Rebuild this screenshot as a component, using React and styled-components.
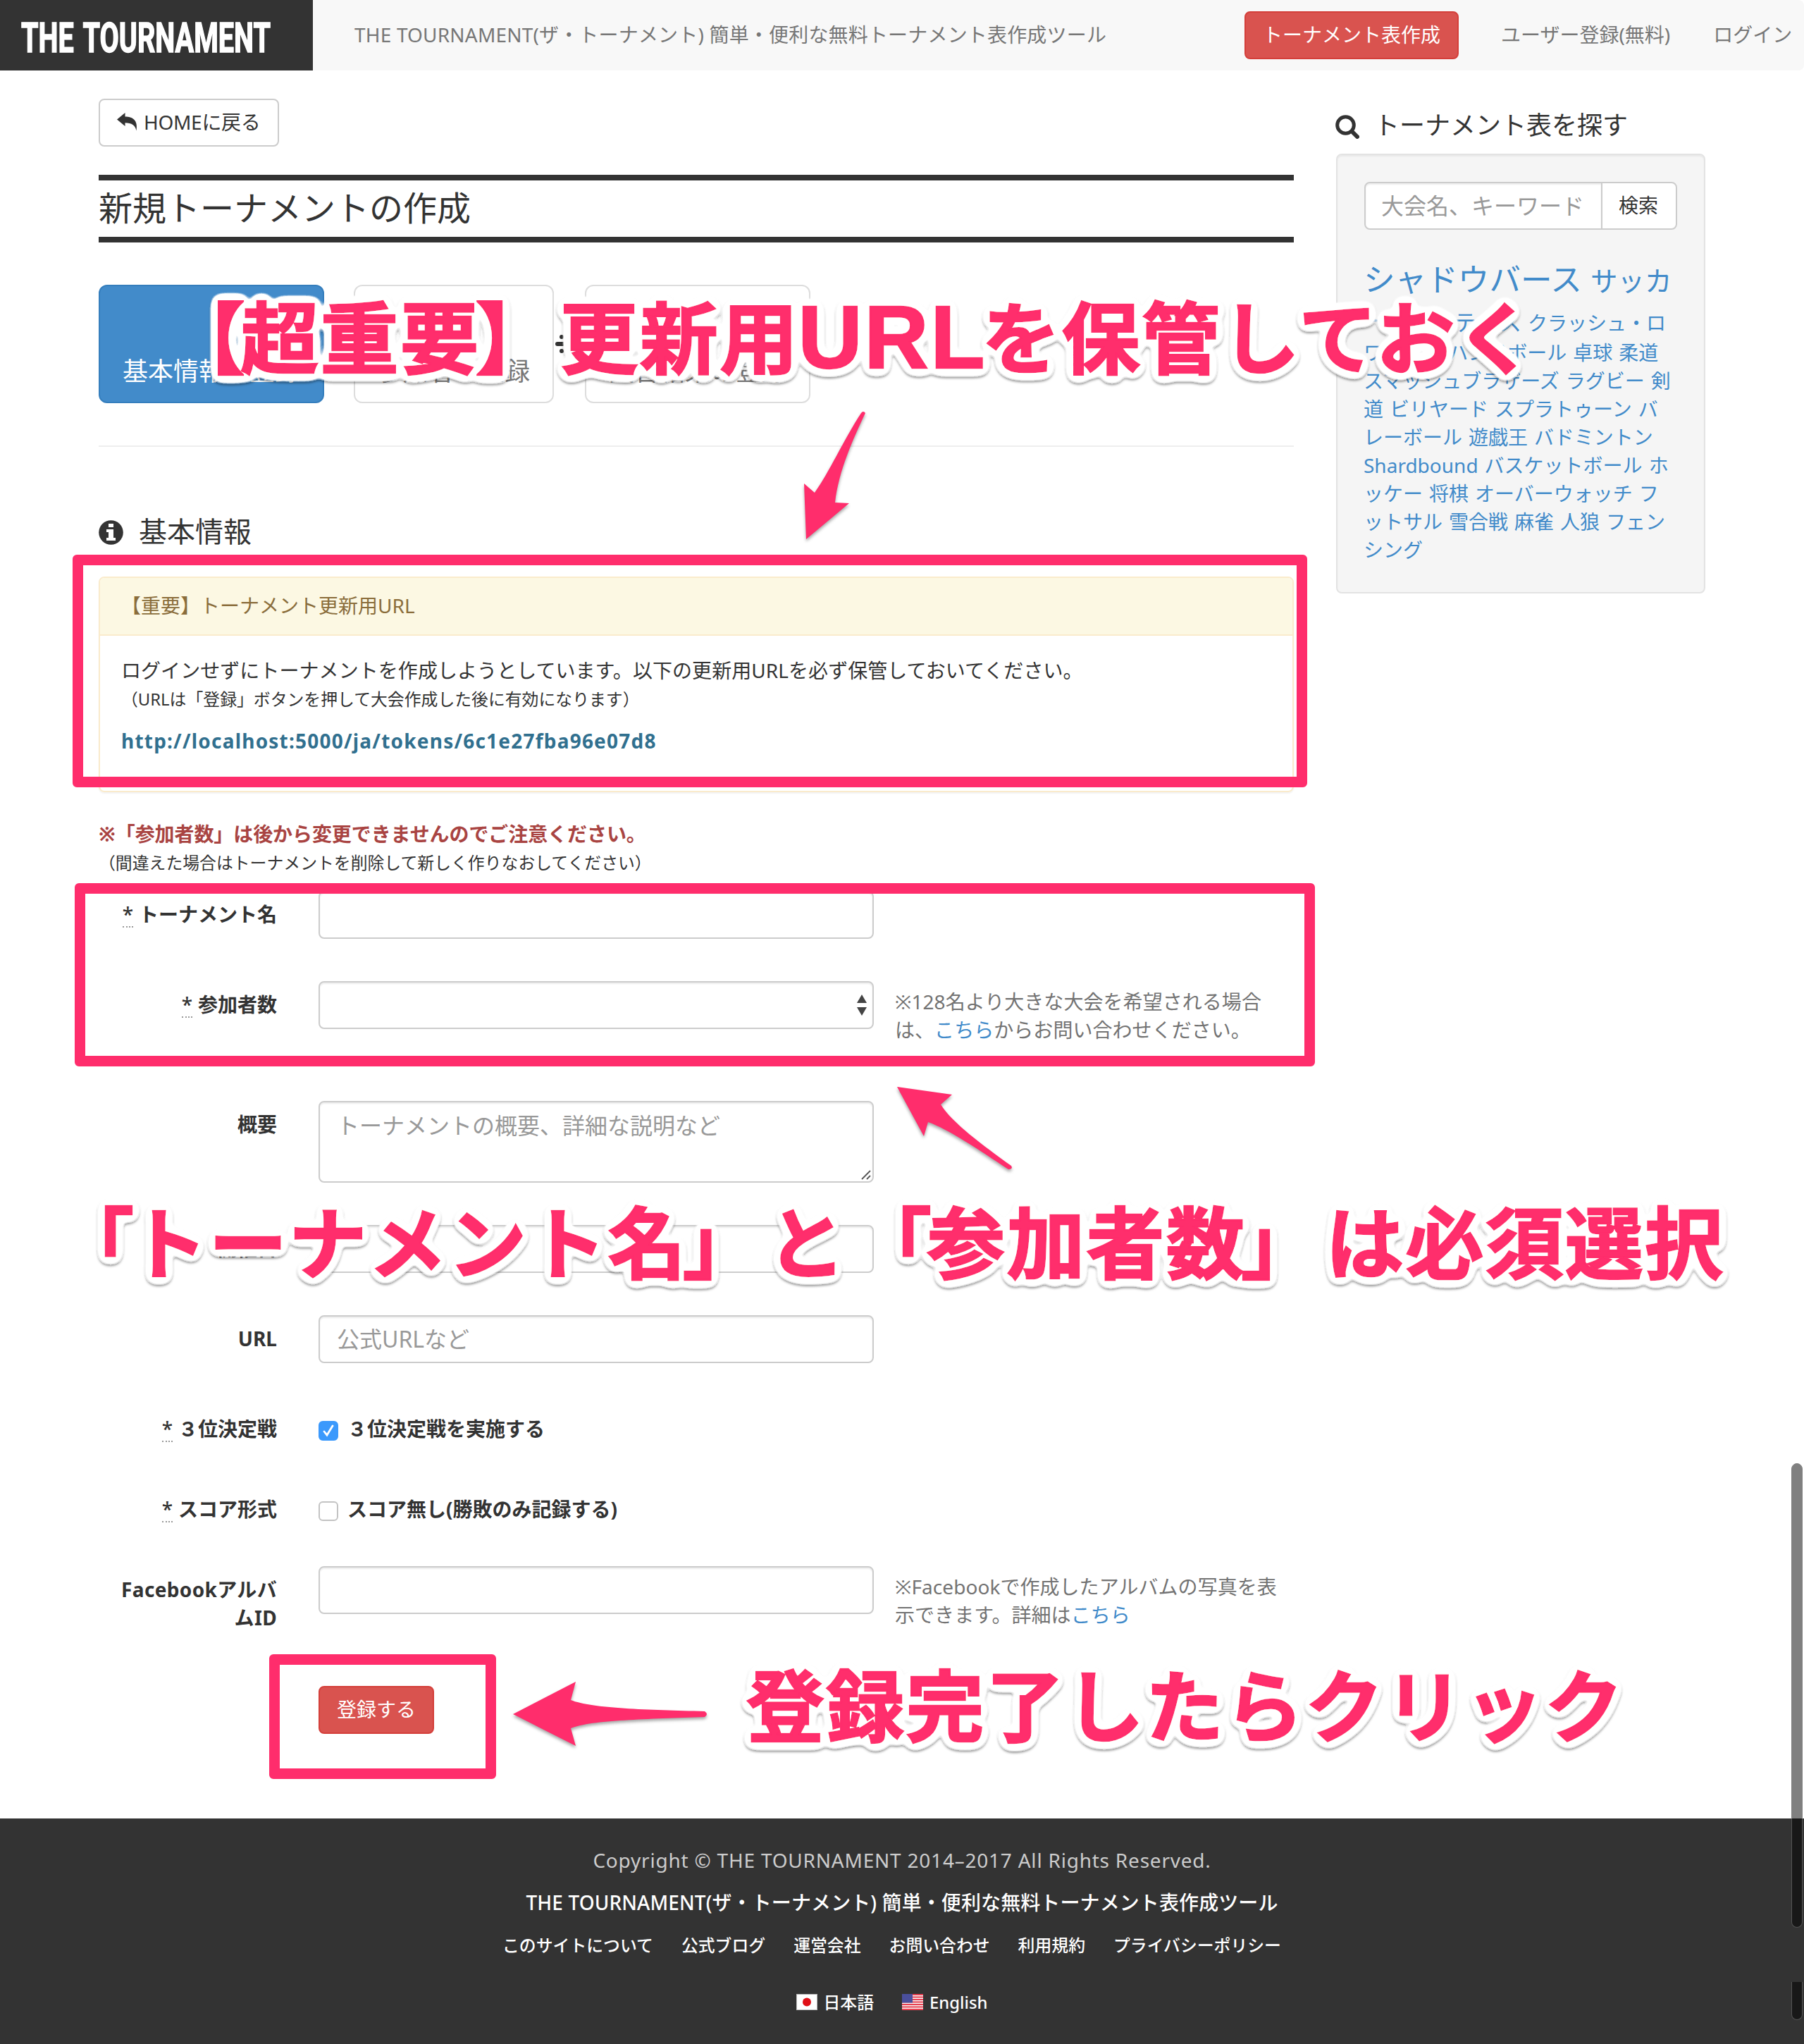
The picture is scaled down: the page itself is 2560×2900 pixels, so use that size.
import React from "react";
import styled, { createGlobalStyle, css } from "styled-components";

const PINK = "#ff2d6c";
const SANS = `"Noto Sans", "Noto Sans CJK JP", sans-serif`;

const GlobalStyle = createGlobalStyle`
  * { box-sizing: border-box; }
  body {
    margin: 0;
    background: #fff;
    color: #333;
    font-family: ${SANS};
    font-size: 28px;
    line-height: 40px;
  }
  input, button, textarea { font-family: inherit; }
`;

const Page = styled.div`
  position: relative;
  width: 2560px;
  height: 2900px;
  overflow: hidden;
`;

/* ---------- navigation ---------- */
const Nav = styled.nav`
  display: flex;
  align-items: center;
  height: 100px;
  background: #f8f8f8;
  border-radius: 0 8px 8px 0;
  color: #777;
  white-space: nowrap;
`;
const Brand = styled.div`
  width: 444px;
  height: 100px;
  padding: 7px 0 0 30px;
  background: #333;
`;
const BrandSvg = styled.svg`
  display: block;
  width: 380px;
  height: 84px;
  overflow: visible;
  font-family: Roboto, sans-serif;
  font-weight: 700;
  font-size: 59px;
  word-spacing: 6px;
  fill: #fff;
  stroke: #fff;
  stroke-width: 1.6px;
`;
const Tagline = styled.div`
  margin-left: 59px;
  width: 1263px;
  padding-bottom: 2px;
  letter-spacing: 0.18px;
`;
const NavLink = styled.a`
  margin-left: ${(p) => p.$gap}px;
  padding-bottom: 2px;
`;

const buttonTones = {
  plain: css`
    background: #fff;
    border-color: #ccc;
    color: #333;
  `,
  danger: css`
    background: #d9534f;
    border-color: #d43f3a;
    color: #fff;
  `,
};
const Button = styled.button`
  display: inline-flex;
  align-items: center;
  height: 68px;
  padding: 0 24px 2px;
  border: 2px solid;
  border-radius: 8px;
  font-size: 28px;
  line-height: 40px;
  white-space: nowrap;
  ${(p) => buttonTones[p.$tone || "plain"]}
`;
const HomeButton = styled(Button)`
  width: 256px;
  gap: 8px;
  letter-spacing: -0.3px;
`;

/* ---------- page body ---------- */
const Body = styled.div`
  display: flex;
  gap: 60px;
  height: 2480px;
  padding: 40px 140px 0;
`;
const Main = styled.main`
  width: 1696px;
`;
const Title = styled.h1`
  margin: 40px 0 0;
  height: 96px;
  border-top: 8px solid #333;
  border-bottom: 8px solid #333;
  font-size: 48px;
  font-weight: 400;
  line-height: 78px;
`;
const Steps = styled.div`
  display: flex;
  align-items: center;
  margin-top: 60px;
`;
const Step = styled.div`
  height: 168px;
  padding: 96px 32px 0;
  border: 2px solid ${(p) => (p.$active ? "#357ebd" : "#ddd")};
  border-radius: 12px;
  background: ${(p) => (p.$active ? "#428bca" : "#fff")};
  color: ${(p) => (p.$active ? "#fff" : "#777")};
  font-size: 36px;
  line-height: 50px;
  white-space: nowrap;
`;
const StepArrow = styled.svg`
  width: ${(p) => p.$w}px;
  height: 32px;
  fill: #333;
`;
const Rule = styled.div`
  height: 2px;
  margin-top: 60px;
  background: #eee;
`;
const SectionHeading = styled.h2`
  display: flex;
  align-items: center;
  gap: 22px;
  margin: 98px 0 42px;
  height: 44px;
  font-size: 40px;
  font-weight: 400;
  line-height: 44px;
  svg { margin-top: 3px; }
`;
const Panel = styled.section`
  height: 306px;
  border: 2px solid #faebcc;
  border-radius: 8px;
  box-shadow: 0 2px 2px rgba(0, 0, 0, 0.05);
  overflow: hidden;
`;
const PanelHead = styled.div`
  height: 82px;
  padding: 19px 30px;
  border-bottom: 2px solid #faebcc;
  background: #fcf8e3;
  color: #8a6d3b;
`;
const PanelBody = styled.div`
  padding: 29px 30px;
`;
const PanelText = styled.div`
  letter-spacing: 0.06px;
`;
const Small = styled.div`
  font-size: 23.85px;
  line-height: 40px;
  margin-top: 1px;
`;
const TokenUrl = styled.div`
  margin-top: 19px;
  color: #31708f;
  font-weight: 700;
  letter-spacing: 1.21px;
`;
const Warning = styled.div`
  margin-top: 39px;
  color: #a94442;
  font-weight: 700;
  letter-spacing: -0.08px;
`;

/* ---------- form ---------- */
const Form = styled.form`
  display: flex;
  flex-direction: column;
  gap: 60px;
  margin-top: 20px;
`;
const Row = styled.div`
  display: grid;
  grid-template-columns: 253px 787px 1fr;
  align-items: start;
  min-height: ${(p) => p.$h || 68}px;
`;
const Label = styled.label`
  padding: 13px 0 0 20px;
  text-align: right;
  font-weight: 700;
  letter-spacing: ${(p) => p.$track || 0}px;
`;
const Required = styled.abbr`
  display: inline-block;
  height: 39px;
  line-height: 40px;
  border-bottom: 2px dotted #999;
  margin-right: 8px;
  font-weight: 500;
  text-decoration: none;
`;
const Control = styled.div`
  margin-left: 59px;
  width: 788px;
`;
const field = css`
  display: block;
  width: 100%;
  height: 68px;
  padding: 0 24px 2px;
  border: 2px solid #ccc;
  border-radius: 8px;
  background: #fff;
  box-shadow: inset 0 2px 2px rgba(0, 0, 0, 0.075);
  color: #555;
  font-size: 32px;
  outline: none;
  &::placeholder { color: #999; opacity: 1; }
`;
const Input = styled.input`
  ${field}
`;
const SelectBox = styled.div`
  ${field}
  display: flex;
  align-items: center;
  justify-content: flex-end;
  padding: 0 8px 0 24px;
`;
const AreaBox = styled.div`
  ${field}
  display: flex;
  justify-content: space-between;
  align-items: flex-end;
  height: 116px;
  padding: 11px 2px 2px 24px;
`;
const AreaText = styled.span`
  align-self: flex-start;
  color: #999;
  line-height: 44px;
`;
const Help = styled.div`
  margin-left: 90px;
  padding: 9px 0 21px;
  width: 566px;
  color: #737373;
  white-space: nowrap;
  letter-spacing: 0.05px;
`;
const Link = styled.a`
  color: #428bca;
`;
const CheckRow = styled.div`
  display: flex;
  align-items: flex-start;
  gap: 13px;
  padding-top: 13px;
  margin-left: 59px;
  font-weight: 700;
  white-space: nowrap;
`;
const Check = styled.span`
  display: grid;
  place-items: center;
  width: 28px;
  height: 28px;
  margin-top: 9px;
  border: 2px solid ${(p) => (p.$on ? "#3b99fc" : "#c3c3c3")};
  border-radius: 6px;
  background: ${(p) => (p.$on ? "#3b99fc" : "#fff")};
`;
const Submit = styled.div`
  padding-left: 312px;
`;

/* ---------- sidebar ---------- */
const Side = styled.aside`
  width: 524px;
`;
const SideHeading = styled.h3`
  display: flex;
  align-items: center;
  gap: 21px;
  margin: 18px 0 20px -1px;
  height: 40px;
  font-size: 36px;
  font-weight: 400;
  white-space: nowrap;
  svg { margin-top: 4px; }
`;
const Well = styled.div`
  height: 624px;
  padding: 38px;
  border: 2px solid #e3e3e3;
  border-radius: 8px;
  background: #f5f5f5;
  box-shadow: inset 0 2px 2px rgba(0, 0, 0, 0.05);
`;
const Search = styled.div`
  display: flex;
  width: 444px;
`;
const SearchInput = styled.input`
  ${field}
  width: 338px;
  padding: 0 22px 2px;
  border-radius: 8px 0 0 8px;
`;
const SearchButton = styled(Button)`
  width: 108px;
  margin-left: -2px;
  padding-left: 23px;
  border-radius: 0 8px 8px 0;
`;
const Tags = styled.div`
  margin: 38px 0 0 -1px;
  color: #428bca;
  white-space: nowrap;
`;
const TagLine = styled.div`
  display: flex;
  align-items: baseline;
  gap: ${(p) => p.$gap ?? 9}px;
  height: ${(p) => p.$h || 40}px;
  line-height: ${(p) => p.$h || 40}px;
`;
const Tag = styled.a`
  font-size: ${(p) => p.$size || 28}px;
`;

/* ---------- footer ---------- */
const Footer = styled.footer`
  display: flex;
  flex-direction: column;
  align-items: center;
  height: 320px;
  padding-top: 39px;
  background: #333;
  color: #fff;
  white-space: nowrap;
`;
const Copyright = styled.div`
  color: #ccc;
  letter-spacing: 0.78px;
`;
const FooterTitle = styled.div`
  margin-top: 20px;
  font-weight: 500;
  letter-spacing: 0.1px;
`;
const FooterLinks = styled.div`
  display: flex;
  gap: 40px;
  margin: ${(p) => p.$top}px 0 0 ${(p) => p.$shift}px;
  font-size: 23.85px;
  font-weight: 500;
`;
const Language = styled.a`
  display: flex;
  align-items: center;
  gap: 9px;
`;

/* ---------- annotations over the page ---------- */
const Frame = styled.div`
  position: absolute;
  left: ${(p) => p.$x}px;
  top: ${(p) => p.$y}px;
  width: ${(p) => p.$w}px;
  height: ${(p) => p.$h}px;
  border: 15px solid ${PINK};
  border-radius: 6px;
`;
const Arrows = styled.svg`
  position: absolute;
  left: 0;
  top: 0;
  fill: ${PINK};
  filter: drop-shadow(0 3px 2px rgba(0, 0, 0, 0.35));
`;
const Callout = styled.div`
  position: absolute;
  left: ${(p) => p.$x}px;
  top: ${(p) => p.$y}px;
  font-family: "Noto Sans CJK JP", sans-serif;
  font-size: 111px;
  font-weight: 700;
  letter-spacing: ${(p) => p.$track ?? 2.3}px;
  line-height: 140px;
  color: ${PINK};
  -webkit-text-stroke: 2.5px ${PINK};
  white-space: nowrap;
  filter: url(#halo);
`;
const Open = styled.span`
  margin: 0 -9px 0 9px;
`;
const Close = styled.span`
  margin: 0 7px 0 -7px;
`;
const Latin = styled.span`
  display: inline-block;
  width: 259px;
  font-family: "Liberation Sans", sans-serif;
  font-size: 126px;
  letter-spacing: 3px;
  line-height: 100px;
  text-indent: -2px;
`;
const ScrollThumb = styled.div`
  position: absolute;
  right: 2px;
  top: ${(p) => p.$y}px;
  width: 16px;
  height: ${(p) => p.$h}px;
  border: 1px solid ${(p) => (p.$dark ? "#555" : "#808080")};
  border-width: ${(p) => (p.$dark ? "0 1px 1px" : "1px")};
  border-radius: ${(p) => (p.$dark ? "0 0 8px 8px" : "8px 8px 0 0")};
  background: ${(p) => (p.$dark ? "#181818" : "#808080")};
`;
const FilterDefs = styled.svg`
  position: absolute;
  width: 0;
  height: 0;
`;

const Halo = () => (
  <FilterDefs>
    <filter id="halo" x="-3%" y="-20%" width="106%" height="140%">
      <feGaussianBlur in="SourceAlpha" stdDeviation="6.4" result="soft" />
      <feComponentTransfer in="soft" result="wide">
        <feFuncA type="linear" slope="25" intercept="-0.7" />
      </feComponentTransfer>
      <feFlood floodColor="#fff" />
      <feComposite in2="wide" operator="in" result="white" />
      <feGaussianBlur in="wide" stdDeviation="1.6" result="shade" />
      <feOffset in="shade" dy="3" result="down" />
      <feFlood floodColor="#000" floodOpacity="0.38" />
      <feComposite in2="down" operator="in" result="shadow" />
      <feMerge>
        <feMergeNode in="shadow" />
        <feMergeNode in="white" />
        <feMergeNode in="SourceGraphic" />
      </feMerge>
    </filter>
  </FilterDefs>
);

const ReplyIcon = () => (
  <svg width="30" height="26" viewBox="0 0 30 26" fill="#333">
    <path d="M0 9.5 11.500 0V5.500C22 5.500 30 10 27.500 25.500 26 17.500 21 14.200 11.500 14.200V19Z" />
  </svg>
);
const SearchIcon = () => (
  <svg width="34" height="34" viewBox="0 0 34 34" fill="none" stroke="#333">
    <circle cx="14.500" cy="14.500" r="11.800" strokeWidth="5" />
    <path d="M23.500 23.500 31 31" strokeWidth="6" strokeLinecap="round" />
  </svg>
);
const InfoIcon = () => (
  <svg width="35" height="35" viewBox="0 0 35 35">
    <circle cx="17.500" cy="17.500" r="17.300" fill="#333" />
    <path d="M14 5h7v5h-7zM11 13h10v12h3v4H11v-4h3v-8h-3z" fill="#fff" />
  </svg>
);
const FlagJp = () => (
  <svg width="30" height="24" viewBox="0 0 30 24">
    <rect x=".5" y=".5" width="29" height="22" fill="#fff" stroke="#bbb" />
    <circle cx="15" cy="11.500" r="6" fill="#e00f16" />
  </svg>
);
const FlagUs = () => (
  <svg width="30" height="24" viewBox="0 0 30 24">
    <rect width="30" height="23" fill="#f6f6f6" />
    {[0, 1, 2, 3, 4, 5, 6].map((i) => (
      <rect key={i} y={i * 3.5} width="30" height="1.900" fill="#e8384a" />
    ))}
    <rect width="15" height="12.500" fill="#4a4f9c" />
  </svg>
);

const tagRows = [
  ["スマッシュブラザーズ", "ラグビー", "剣"],
  ["道", "ビリヤード", "スプラトゥーン", "バ"],
  ["レーボール", "遊戯王", "バドミントン"],
  ["Shardbound", "バスケットボール", "ホ"],
  ["ッケー", "将棋", "オーバーウォッチ", "フ"],
  ["ットサル", "雪合戦", "麻雀", "人狼", "フェン"],
  ["シング"],
];
const siteLinks = ["このサイトについて", "公式ブログ", "運営会社", "お問い合わせ", "利用規約", "プライバシーポリシー"];
const siteTitle = "THE TOURNAMENT(ザ・トーナメント) 簡単・便利な無料トーナメント表作成ツール";

export default function App() {
  return (
    <Page>
      <GlobalStyle />
      <Nav>
        <Brand>
          <BrandSvg viewBox="0 0 380 84">
            <text x="0" y="67" textLength="354" lengthAdjust="spacingAndGlyphs">THE TOURNAMENT</text>
          </BrandSvg>
        </Brand>
        <Tagline>{siteTitle}</Tagline>
        <Button $tone="danger">トーナメント表作成</Button>
        <NavLink $gap={60}>ユーザー登録(無料)</NavLink>
        <NavLink $gap={61}>ログイン</NavLink>
      </Nav>

      <Body>
        <Main>
          <HomeButton><ReplyIcon />HOMEに戻る</HomeButton>
          <Title>新規トーナメントの作成</Title>
          <Steps>
            <Step $active>基本情報の登録</Step>
            <StepArrow $w={42} viewBox="0 0 42 32"><path d="M4 13h18V6l14 10-14 10v-7H4z" /></StepArrow>
            <Step>参加者の登録</Step>
            <StepArrow $w={44} viewBox="0 0 44 32">
              <path d="M5 13h20V6l14 10-14 10v-7H5a3 3 0 0 1 0-6z" />
              <circle cx="11" cy="6" r="3" />
              <circle cx="11" cy="26" r="3" />
            </StepArrow>
            <Step>試合結果の登録</Step>
          </Steps>
          <Rule />
          <SectionHeading><InfoIcon />基本情報</SectionHeading>
          <Panel>
            <PanelHead>【重要】トーナメント更新用URL</PanelHead>
            <PanelBody>
              <PanelText>ログインせずにトーナメントを作成しようとしています。以下の更新用URLを必ず保管しておいてください。</PanelText>
              <Small>（URLは「登録」ボタンを押して大会作成した後に有効になります）</Small>
              <TokenUrl>http://localhost:5000/ja/tokens/6c1e27fba96e07d8</TokenUrl>
            </PanelBody>
          </Panel>
          <Warning>※「参加者数」は後から変更できませんのでご注意ください。</Warning>
          <Small>（間違えた場合はトーナメントを削除して新しく作りなおしてください）</Small>

          <Form>
            <Row>
              <Label><Required>*</Required>トーナメント名</Label>
              <Control><Input /></Control>
            </Row>
            <Row>
              <Label><Required>*</Required>参加者数</Label>
              <Control>
                <SelectBox>
                  <svg width="14" height="30" viewBox="0 0 14 30" fill="#444">
                    <path d="M0 12 7 0l7 12zM0 18h14L7 30z" />
                  </svg>
                </SelectBox>
              </Control>
              <Help>
                ※128名より大きな大会を希望される場合<br />
                は、<Link>こちら</Link>からお問い合わせください。
              </Help>
            </Row>
            <Row $h={116}>
              <Label>概要</Label>
              <Control>
                <AreaBox>
                  <AreaText>トーナメントの概要、詳細な説明など</AreaText>
                  <svg width="14" height="14" viewBox="0 0 14 14" stroke="#555" strokeWidth="1.800">
                    <path d="M1 13 13 1M8 13l5-5" />
                  </svg>
                </AreaBox>
              </Control>
            </Row>
            <Row>
              <Label>開催日</Label>
              <Control><Input /></Control>
            </Row>
            <Row>
              <Label>URL</Label>
              <Control><Input placeholder="公式URLなど" /></Control>
            </Row>
            <Row $h={54}>
              <Label><Required>*</Required>３位決定戦</Label>
              <CheckRow>
                <Check $on>
                  <svg width="20" height="20" viewBox="0 0 20 20" fill="none" stroke="#fff" strokeWidth="2.800" strokeLinecap="round">
                    <path d="M4 11l4 5L16 3" />
                  </svg>
                </Check>
                ３位決定戦を実施する
              </CheckRow>
            </Row>
            <Row $h={54}>
              <Label><Required>*</Required>スコア形式</Label>
              <CheckRow><Check />スコア無し(勝敗のみ記録する)</CheckRow>
            </Row>
            <Row>
              <Label $track={0.35}>Facebookアルバ<br />ムID</Label>
              <Control><Input /></Control>
              <Help>
                ※Facebookで作成したアルバムの写真を表<br />
                示できます。詳細は<Link>こちら</Link>
              </Help>
            </Row>
            <Submit><Button type="button" $tone="danger">登録する</Button></Submit>
          </Form>
        </Main>

        <Side>
          <SideHeading><SearchIcon />トーナメント表を探す</SideHeading>
          <Well>
            <Search>
              <SearchInput placeholder="大会名、キーワード" />
              <SearchButton>検索</SearchButton>
            </Search>
            <Tags>
              <TagLine $h={64} $gap={12}><Tag $size={44.6}>シャドウバース</Tag><Tag $size={38.5}>サッカ</Tag></TagLine>
              <TagLine $h={52}><Tag $size={38}>ー</Tag><Tag $size={36}>野球</Tag><Tag $size={32}>テニス</Tag><Tag>クラッシュ・ロ</Tag></TagLine>
              <TagLine><Tag>ワイヤル</Tag><Tag>ハンドボール</Tag><Tag>卓球</Tag><Tag>柔道</Tag></TagLine>
              {tagRows.map((row) => (
                <TagLine key={row[0]}>{row.map((t) => <Tag key={t}>{t}</Tag>)}</TagLine>
              ))}
            </Tags>
          </Well>
        </Side>
      </Body>

      <Footer>
        <Copyright>Copyright © THE TOURNAMENT 2014–2017 All Rights Reserved.</Copyright>
        <FooterTitle>{siteTitle}</FooterTitle>
        <FooterLinks $top={21} $shift={-29}>
          {siteLinks.map((t) => <a key={t}>{t}</a>)}
        </FooterLinks>
        <FooterLinks $top={41} $shift={-29}>
          <Language><FlagJp />日本語</Language>
          <Language><FlagUs />English</Language>
        </FooterLinks>
      </Footer>

      <Halo />
      <Frame $x={103} $y={787} $w={1752} $h={330} />
      <Frame $x={106} $y={1253} $w={1760} $h={260} />
      <Frame $x={382} $y={2347} $w={322} $h={177} />
      <Arrows width="2560" height="2900" viewBox="0 0 2560 2900">
        <path d="M1144 765 1141 686 1156 699C1178 668 1196 626 1222 586Q1225 582 1228 586C1211 622 1190 668 1185 713L1205 714Z" />
        <path d="M1273 1542 1351 1553 1335 1567C1350 1592 1396 1626 1435 1654Q1438 1659 1431 1659C1390 1632 1346 1602 1317 1592L1311 1612Z" />
        <path d="M728 2432 817 2386 810 2412C840 2424 920 2426 1000 2428Q1006 2432 1000 2436C920 2439 840 2440 810 2452L817 2477Z" />
      </Arrows>
      <Callout $x={228} $y={404}>
        <Open>【</Open>超重要<Close>】</Close>更新用<Latin>URL</Latin>を保管しておく
      </Callout>
      <Callout $x={70} $y={1688} $track={2.2}>
        <Open>「</Open>トーナメント名<Close>」</Close>と<Open>「</Open>参加者数<Close>」</Close>は必須選択
      </Callout>
      <Callout $x={1059} $y={2345}>登録完了したらクリック</Callout>
      <ScrollThumb $y={2076} $h={504} />
      <ScrollThumb $y={2580} $h={155} $dark />
      <ScrollThumb $y={2812} $h={54} $dark />
    </Page>
  );
}
